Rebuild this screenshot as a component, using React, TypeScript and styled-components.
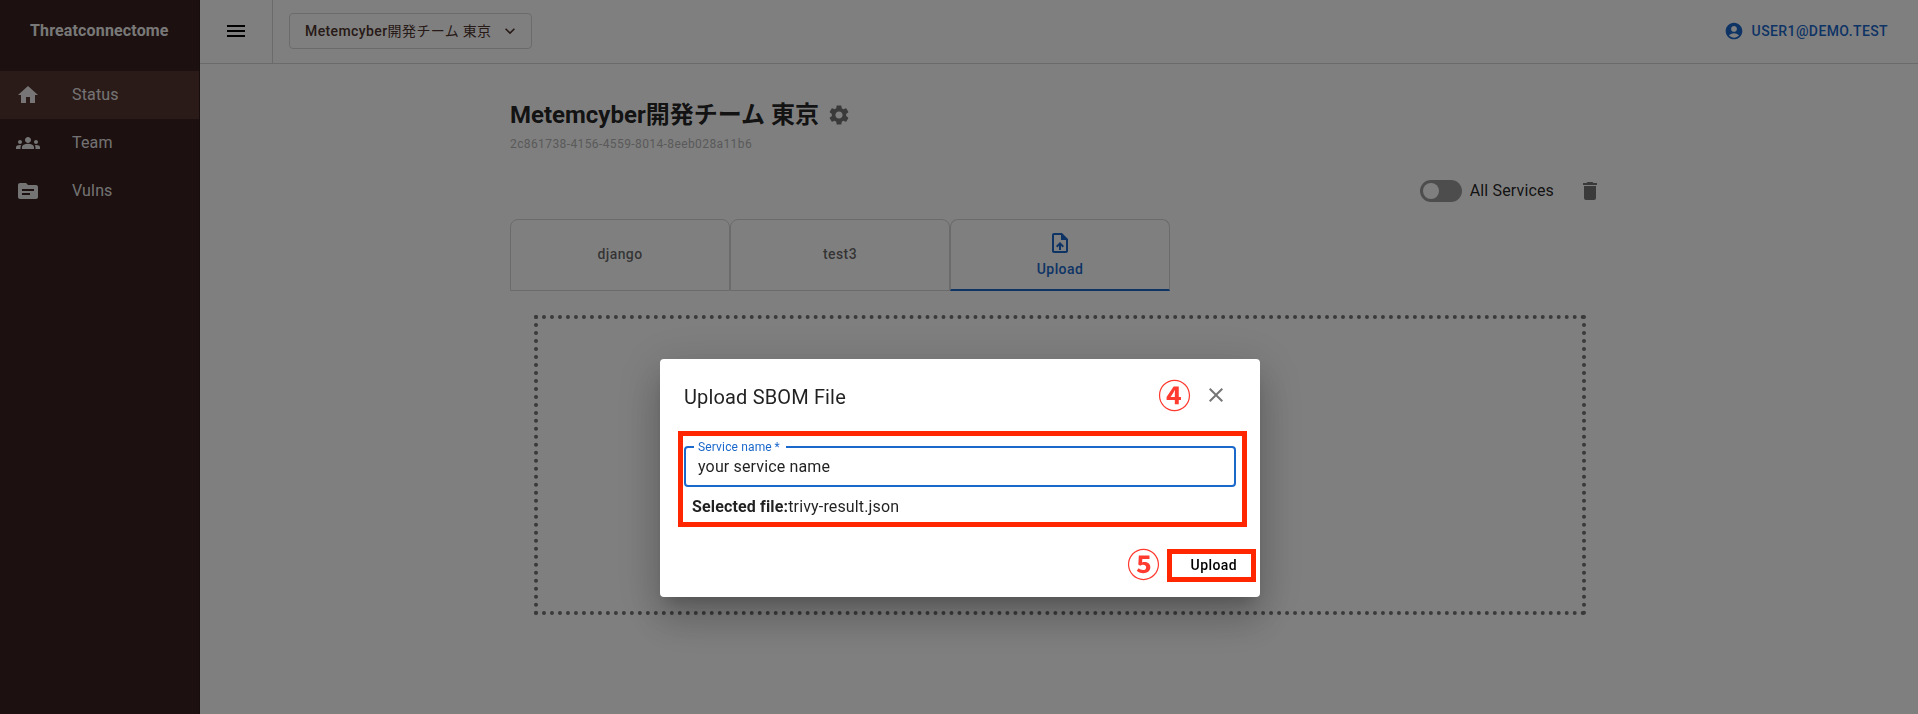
import React from "react";
import styled, { createGlobalStyle } from "styled-components";
import {
  MdAccountCircle,
  MdClose,
  MdDelete,
  MdGroups,
  MdHome,
  MdKeyboardArrowDown,
  MdMenu,
  MdOutlineUploadFile,
  MdSettings,
  MdSource,
} from "react-icons/md";

const Global = createGlobalStyle`
  *, *::before, *::after { box-sizing: border-box; }
  body {
    margin: 0;
    overflow: hidden;
    font-family: Roboto, "Noto Sans CJK JP", sans-serif;
    font-size: 16px;
    line-height: 1.5;
    letter-spacing: 0.00938em;
    color: rgba(0, 0, 0, 0.87);
    background: #fff;
  }
  button { font: inherit; letter-spacing: inherit; background: none; border: 0; padding: 0; }
  h1, h2, p { margin: 0; }
`;

const Page = styled.div`
  display: flex;
  height: 100vh;
`;

const Sidebar = styled.nav`
  width: 200px;
  flex: none;
  background: #382120;
  border-right: 1px solid #2c1a19;
  color: #fff;
`;

const Brand = styled.div`
  height: 71px;
  padding: 18px 0 0 30px;
  font-weight: 700;
  line-height: 26px;
  color: rgba(255, 255, 255, 0.94);
`;

const NavItem = styled.a<{ $active?: boolean }>`
  display: flex;
  align-items: center;
  height: 48px;
  padding-left: 16px;
  gap: 32px;
  color: rgba(255, 255, 255, 0.9);
  background: ${(p) => (p.$active ? "#543632" : "transparent")};
  svg { font-size: 24px; }
`;

const Main = styled.div`
  flex: 1;
  min-width: 0;
`;

const TopBar = styled.header`
  display: flex;
  align-items: center;
  height: 64px;
  padding-bottom: 1px;
  border-bottom: 1px solid #d6d6d6;
`;

const MenuButton = styled.button`
  display: flex;
  align-items: center;
  justify-content: center;
  height: 63px;
  margin-bottom: -1px;
  padding-bottom: 1px;
  width: 73px;
  border-right: 1px solid #d6d6d6;
  color: #000;
  font-size: 24px;
`;

const TeamSelect = styled.button`
  display: flex;
  align-items: center;
  justify-content: space-between;
  width: 243px;
  height: 36px;
  margin-left: 16px;
  padding: 0 11px 0 15px;
  border: 1px solid #d6d6d6;
  border-radius: 4px;
  color: #4e342e;
  font-size: 14px;
  font-weight: 500;
  letter-spacing: 0.02857em;
  svg { font-size: 20px; }
`;

const Kanji = styled.span`
  font-weight: 400;
  font-family: "Noto Sans CJK JP", sans-serif;
  line-height: 1;
`;

const Account = styled.button`
  display: flex;
  align-items: center;
  gap: 8px;
  margin: 0 30px 0 auto;
  color: #1b68cb;
  font-size: 14px;
  font-weight: 500;
  letter-spacing: 0.02857em;
  svg { font-size: 20px; }
`;

const Content = styled.main`
  width: 1100px;
  margin-left: 310px;
  padding-top: 34px;
`;

const TitleRow = styled.div`
  display: flex;
  align-items: center;
  height: 34px;
  gap: 8px;
  color: #757575;
  svg { font-size: 24px; }
`;

const Title = styled.h1`
  font-size: 24px;
  font-weight: 700;
  line-height: 34px;
  letter-spacing: 0;
  color: rgba(0, 0, 0, 0.87);
`;

const TeamId = styled.p`
  margin-top: 2px;
  font-size: 12px;
  line-height: 20px;
  letter-spacing: 0.03333em;
  color: #b4b4b4;
`;

const Actions = styled.div`
  display: flex;
  justify-content: flex-end;
  align-items: center;
  height: 38px;
  margin-top: 18px;
  padding-right: 8px;
  svg { font-size: 24px; color: #757575; margin-left: 24px; }
`;

const Switch = styled.span`
  width: 42px;
  height: 22px;
  margin-right: 8px;
  padding: 3px;
  border-radius: 11px;
  background: #9b9b9b;
`;

const Thumb = styled.span`
  display: block;
  width: 16px;
  height: 16px;
  border-radius: 50%;
  background: #fff;
`;

const Tabs = styled.div`
  display: flex;
  margin-top: 9px;
`;

const Tab = styled.button<{ $active?: boolean }>`
  display: flex;
  flex-direction: column;
  align-items: center;
  justify-content: center;
  gap: 5px;
  width: 220px;
  height: 72px;
  padding-bottom: ${(p) => (p.$active ? "0" : "2px")};
  border: 1px solid #d6d6d6;
  border-bottom: ${(p) => (p.$active ? "2px solid #1b68cb" : "1px solid #d6d6d6")};
  border-radius: 8px 8px 0 0;
  color: ${(p) => (p.$active ? "#1b68cb" : "rgba(0, 0, 0, 0.6)")};
  font-size: 14px;
  font-weight: 500;
  line-height: 18px;
  letter-spacing: 0.02857em;
  svg { font-size: 24px; }
`;

const DropZone = styled.div`
  height: 300px;
  margin: 24px 24px 0;
  border: 4px dotted #757575;
`;

const Backdrop = styled.div`
  position: fixed;
  inset: 0;
  display: flex;
  align-items: flex-start;
  justify-content: center;
  padding: 359px 0 0 2px;
  background: rgba(0, 0, 0, 0.5);
`;

const Dialog = styled.section`
  position: relative;
  display: flex;
  flex-direction: column;
  width: 600px;
  height: 238px;
  padding: 17px 24px 14px;
  border-radius: 4px;
  background: #fff;
  box-shadow: 0 11px 15px -7px rgba(0, 0, 0, 0.2), 0 24px 38px 3px rgba(0, 0, 0, 0.14),
    0 9px 46px 8px rgba(0, 0, 0, 0.12);
`;

const DialogHead = styled.div`
  display: flex;
  align-items: center;
  justify-content: space-between;
  height: 38px;
  padding-right: 8px;
  svg { font-size: 24px; color: #757575; }
`;

const DialogTitle = styled.h2`
  padding-top: 3px;
  font-size: 20px;
  font-weight: 400;
  line-height: 32px;
  letter-spacing: 0.0075em;
`;

const Field = styled.fieldset`
  height: 46px;
  min-width: 0;
  margin: 27px 0 0;
  padding: 0 12px;
  border: 2px solid #1b68cb;
  border-radius: 4px;
  line-height: 28px;
`;

const Legend = styled.legend`
  margin-left: -4px;
  padding: 0 6px 0 4px;
  color: #1b68cb;
  font-size: 12px;
  line-height: 12px;
`;

const SelectedFile = styled.p`
  margin-top: 8px;
  padding-left: 8px;
  line-height: 24px;
`;

const UploadButton = styled.button`
  margin: auto -1px 0 auto;
  color: #000;
  font-size: 14px;
  font-weight: 500;
  line-height: 36px;
  letter-spacing: 0.02857em;
`;

/* Annotation frames and step numbers lie over the dialog. */
const Highlight = styled.div<{ $x: number; $y: number; $w: number; $h: number }>`
  position: absolute;
  left: ${(p) => p.$x}px;
  top: ${(p) => p.$y}px;
  width: ${(p) => p.$w}px;
  height: ${(p) => p.$h}px;
  border: 5px solid #ff2600;
`;

const Step = styled.span<{ $x: number; $y: number }>`
  position: absolute;
  left: ${(p) => p.$x}px;
  top: ${(p) => p.$y}px;
  width: 34px;
  color: #ff3b30;
  font-family: "Noto Sans CJK JP", sans-serif;
  font-size: 33px;
  font-weight: 700;
  line-height: 34px;
  letter-spacing: 0;
`;

export default function App() {
  return (
    <>
      <Global />
      <Page>
        <Sidebar>
          <Brand>Threatconnectome</Brand>
          <NavItem $active><MdHome />Status</NavItem>
          <NavItem><MdGroups />Team</NavItem>
          <NavItem><MdSource />Vulns</NavItem>
        </Sidebar>
        <Main>
          <TopBar>
            <MenuButton aria-label="Menu"><MdMenu /></MenuButton>
            <TeamSelect>
              <span>Metemcyber<Kanji>開発チーム 東京</Kanji></span>
              <MdKeyboardArrowDown />
            </TeamSelect>
            <Account><MdAccountCircle />USER1@DEMO.TEST</Account>
          </TopBar>
          <Content>
            <TitleRow>
              <Title>Metemcyber開発チーム 東京</Title>
              <MdSettings />
            </TitleRow>
            <TeamId>2c861738-4156-4559-8014-8eeb028a11b6</TeamId>
            <Actions>
              <Switch><Thumb /></Switch>
              All Services
              <MdDelete />
            </Actions>
            <Tabs>
              <Tab>django</Tab>
              <Tab>test3</Tab>
              <Tab $active><MdOutlineUploadFile />Upload</Tab>
            </Tabs>
            <DropZone />
          </Content>
        </Main>
      </Page>
      <Backdrop>
        <Dialog role="dialog">
          <DialogHead>
            <DialogTitle>Upload SBOM File</DialogTitle>
            <MdClose />
          </DialogHead>
          <Field>
            <Legend>Service name&#8201;*</Legend>
            your service name
          </Field>
          <SelectedFile><b>Selected file:</b>trivy-result.json</SelectedFile>
          <UploadButton>Upload</UploadButton>
          <Highlight $x={18} $y={72} $w={568.5} $h={96} />
          <Highlight $x={507} $y={189.5} $w={88.5} $h={33} />
          <Step $x={498} $y={18}>④</Step>
          <Step $x={467} $y={187}>⑤</Step>
        </Dialog>
      </Backdrop>
    </>
  );
}
